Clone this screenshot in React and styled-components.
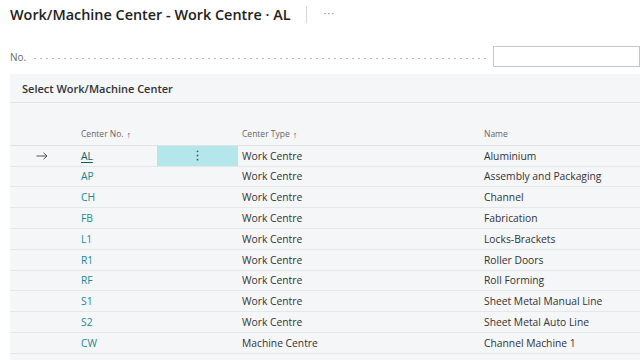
import styled, { createGlobalStyle } from 'styled-components'

const Global = createGlobalStyle`
  body {
    margin: 0;
    background: #ffffff;
    font-family: "Open Sans", "Noto Sans", sans-serif;
    color: #212121;
    overflow: hidden;
  }
`

const Page = styled.div`
  width: 640px;
  height: 360px;
  overflow: hidden;
  padding-left: 10px;
  box-sizing: border-box;
`

const TitleBar = styled.div`
  display: flex;
  align-items: center;
  height: 28px;
`

const Title = styled.h1`
  margin: 0;
  font-size: 14.4px;
  font-weight: 600;
  color: #212121;
`

const Divider = styled.span`
  width: 1px;
  height: 17px;
  background: #d6d6d6;
  margin-left: 16px;
`

const More = styled.span`
  margin-left: 16px;
  font-size: 11px;
  color: #888;
  letter-spacing: 1px;
  margin-top: -4px;
`

const FieldRow = styled.div`
  display: flex;
  align-items: center;
  margin-top: 18px;
  height: 21px;
`

const FieldLabel = styled.span`
  font-size: 10px;
  color: #666;
`

const Dots = styled.span`
  flex: 1;
  height: 1px;
  margin: 3px 5px 0 6px;
  background-image: radial-gradient(circle, #b8b8b8 0.6px, transparent 0.8px);
  background-size: 6px 1px;
  background-position: 0 0;
`

const Input = styled.div`
  width: 145px;
  height: 19px;
  border: 1px solid #c6c6c6;
  background: #fff;
  flex-shrink: 0;
`

const Panel = styled.section`
  margin-top: 7px;
  background: #f5f6f8;
  height: 300px;
`

const PanelHeader = styled.div`
  height: 28px;
  display: flex;
  align-items: center;
  padding-left: 12px;
  font-size: 11px;
  font-weight: 600;
  color: #333;
  border-bottom: 1px solid #e2e3e5;
`

const Grid = styled.div`
  margin-top: 22px;
`

const Row = styled.div`
  display: grid;
  grid-template-columns: 61px 86px 81px 236px 1fr;
  height: 19.8px;
  border-bottom: 1px solid ${(p) => (p.head ? '#e1e2e4' : '#e6e7e9')};
  align-items: center;
`

const Cell = styled.div`
  height: 100%;
  box-sizing: border-box;
  display: flex;
  align-items: ${(p) => (p.head ? 'flex-start' : 'center')};
  padding-top: ${(p) => (p.head ? '3px' : '0')};
  padding-left: ${(p) => p.pad ?? 10}px;
  font-size: ${(p) => (p.head ? '8.5px' : '10.3px')};
  color: ${(p) => (p.head ? '#666' : '#333')};
  white-space: nowrap;
  overflow: hidden;
`

const Sort = styled.span`
  font-size: 9px;
  margin-left: 3px;
  color: #555;
`

const ArrowCell = styled(Cell)`
  justify-content: center;
  padding-left: 2px;
  color: #444;
`

const Code = styled.span`
  text-decoration: ${(p) => (p.active ? 'underline' : 'none')};
  text-underline-offset: 2px;
  color: ${(p) => (p.active ? '#0b6068' : '#1a8a92')};
`

const ActionCell = styled.div`
  height: 100%;
  display: flex;
  align-items: center;
  justify-content: center;
  background: ${(p) => (p.active ? '#b3e7eb' : 'transparent')};
`

const ArrowIcon = () => (
  <svg width="12" height="8" viewBox="0 0 12 8" fill="none" stroke="#444" strokeWidth="0.9">
    <path d="M0.5 4h10.5M7.5 0.7L11 4 7.5 7.3" />
  </svg>
)

const KebabIcon = () => (
  <svg width="3" height="11" viewBox="0 0 3 11" fill="#555">
    <circle cx="1.5" cy="1.3" r="0.9" />
    <circle cx="1.5" cy="5.5" r="0.9" />
    <circle cx="1.5" cy="9.7" r="0.9" />
  </svg>
)

const rows = [
  ['AL', 'Work Centre', 'Aluminium'],
  ['AP', 'Work Centre', 'Assembly and Packaging'],
  ['CH', 'Work Centre', 'Channel'],
  ['FB', 'Work Centre', 'Fabrication'],
  ['L1', 'Work Centre', 'Locks-Brackets'],
  ['R1', 'Work Centre', 'Roller Doors'],
  ['RF', 'Work Centre', 'Roll Forming'],
  ['S1', 'Work Centre', 'Sheet Metal Manual Line'],
  ['S2', 'Work Centre', 'Sheet Metal Auto Line'],
  ['CW', 'Machine Centre', 'Channel Machine 1'],
]

export default function App() {
  return (
    <Page>
      <Global />
      <TitleBar>
        <Title>Work/Machine Center - Work Centre · AL</Title>
        <Divider />
        <More>···</More>
      </TitleBar>
      <FieldRow>
        <FieldLabel>No.</FieldLabel>
        <Dots />
        <Input />
      </FieldRow>
      <Panel>
        <PanelHeader>Select Work/Machine Center</PanelHeader>
        <Grid>
          <Row head>
            <Cell head />
            <Cell head>Center No.<Sort>↑</Sort></Cell>
            <Cell head />
            <Cell head pad={4}>Center Type<Sort>↑</Sort></Cell>
            <Cell head>Name</Cell>
          </Row>
          {rows.map(([code, type, name], i) => (
            <Row key={code}>
              <ArrowCell>{i === 0 && <ArrowIcon />}</ArrowCell>
              <Cell>
                <Code active={i === 0}>{code}</Code>
              </Cell>
              <ActionCell active={i === 0}>{i === 0 && <KebabIcon />}</ActionCell>
              <Cell pad={4}>{type}</Cell>
              <Cell>{name}</Cell>
            </Row>
          ))}
        </Grid>
      </Panel>
    </Page>
  )
}
